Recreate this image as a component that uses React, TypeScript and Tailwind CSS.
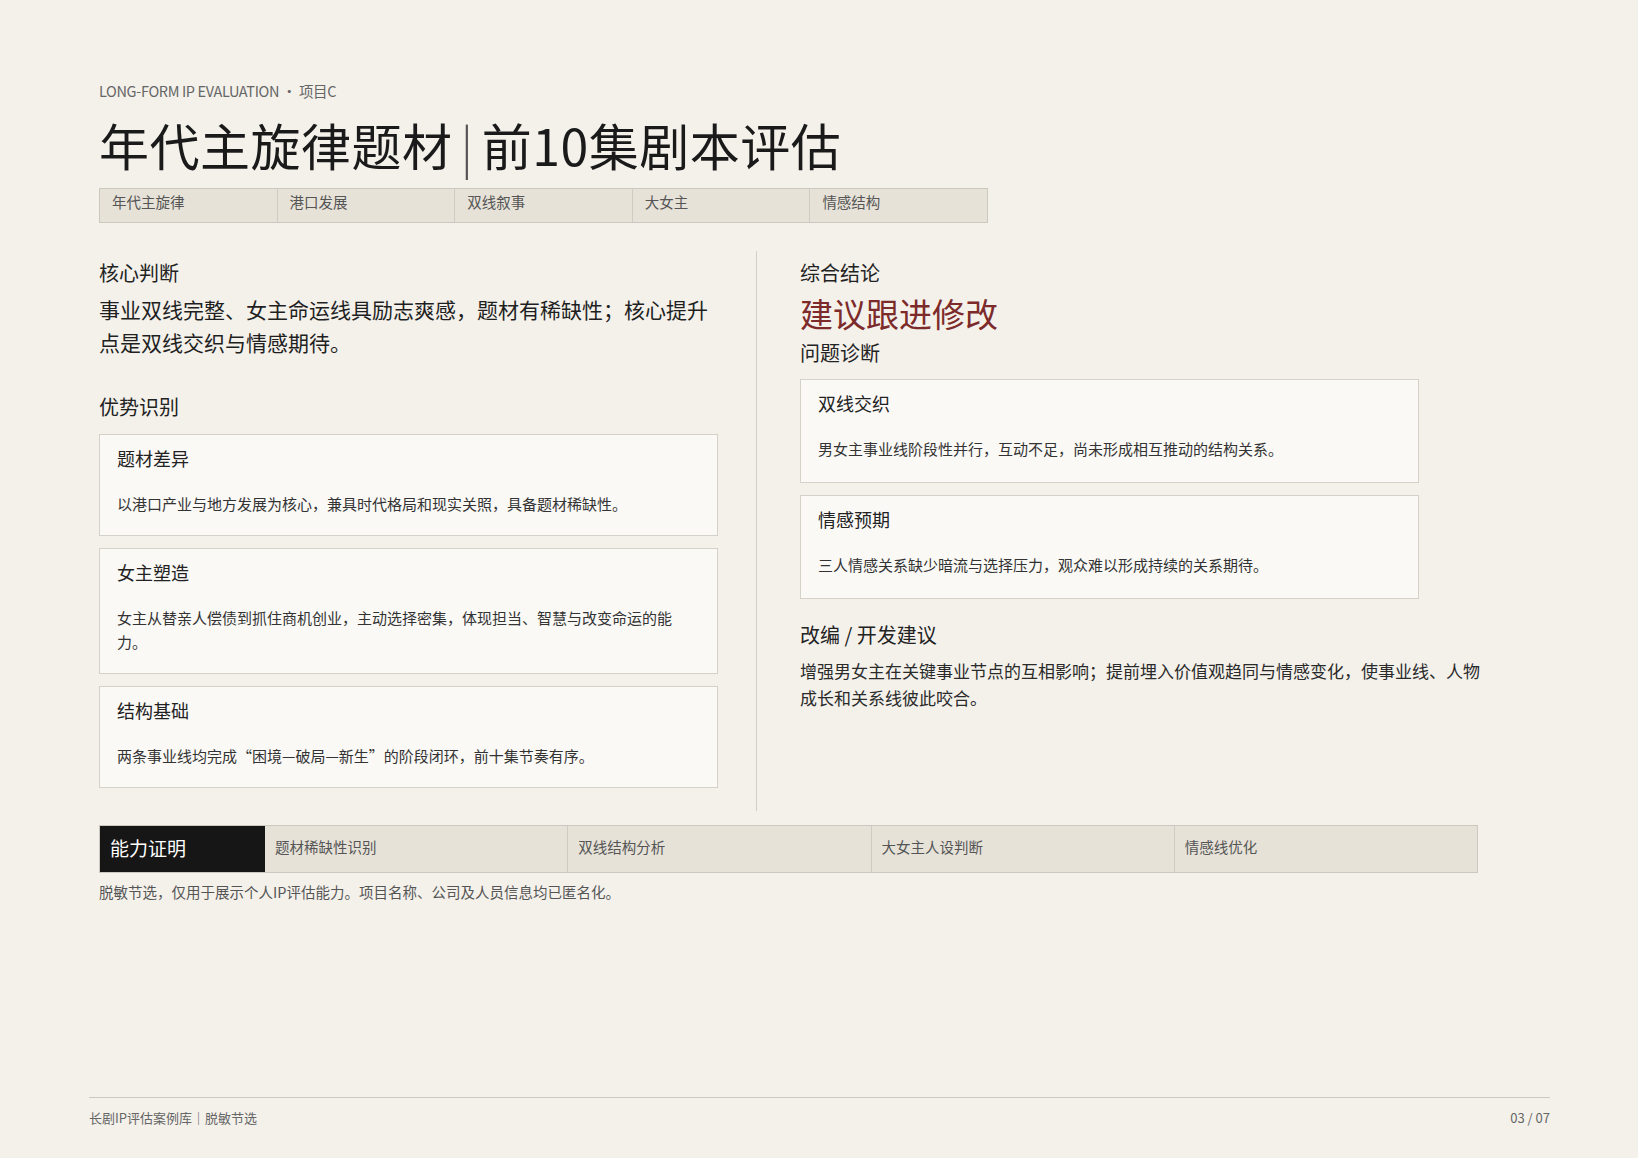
const font = { fontFamily: '"Noto Sans CJK SC", "Noto Sans", sans-serif' };

const tags = ["年代主旋律", "港口发展", "双线叙事", "大女主", "情感结构"];
const strengths = [
  { t: "题材差异", d: "以港口产业与地方发展为核心，兼具时代格局和现实关照，具备题材稀缺性。", h: "h-[102px]" },
  { t: "女主塑造", d: "女主从替亲人偿债到抓住商机创业，主动选择密集，体现担当、智慧与改变命运的能力。", h: "h-[126px]" },
  { t: "结构基础", d: "两条事业线均完成“困境—破局—新生”的阶段闭环，前十集节奏有序。", h: "h-[102px]" },
];
const issues = [
  { t: "双线交织", d: "男女主事业线阶段性并行，互动不足，尚未形成相互推动的结构关系。" },
  { t: "情感预期", d: "三人情感关系缺少暗流与选择压力，观众难以形成持续的关系期待。" },
];
const skills = ["题材稀缺性识别", "双线结构分析", "大女主人设判断", "情感线优化"];

function Card({ t, d, h }: { t: string; d: string; h: string }) {
  return (
    <div className={`${h} border border-[#d5d1c8] bg-[#faf9f6] px-[17px] pt-[10px]`}>
      <div className="text-[18px] text-[#222] leading-[26px]">{t}</div>
      <div className="mt-[21px] text-[15px] leading-[24px] text-[#333]">{d}</div>
    </div>
  );
}

export default function App() {
  return (
    <div style={font} className="w-[1638px] h-[1158px] bg-[#f4f1eb] relative overflow-hidden">
      <div className="pl-[99px] pt-[80px]">
        <div className="text-[14.5px] text-[#666] leading-[22px] tracking-tight">LONG-FORM IP EVALUATION ・ 项目C</div>
        <h1 className="mt-[12px] text-[50px] leading-[60px] text-[#1a1a1a] tracking-[0.5px]">
          年代主旋律题材<span className="text-[#555] font-light mx-[8px]">|</span>前10集剧本评估
        </h1>
        <div className="mt-[14px] flex w-[889px] h-[35px] border border-[#ccc8bf] bg-[#e6e2d8]">
          {tags.map((t, i) => (
            <div key={t} className={`flex-1 px-[12px] text-[14.5px] leading-[26px] text-[#555] ${i ? "border-l border-[#d0ccc3]" : ""}`}>{t}</div>
          ))}
        </div>

        <div className="mt-[28px] flex">
          <div className="w-[619px]">
            <div className="mt-[8px] text-[20px] leading-[28px] text-[#222]">核心判断</div>
            <div className="mt-[6px] text-[21px] leading-[33px] text-[#1f1f1f]">事业双线完整、女主命运线具励志爽感，题材有稀缺性；核心提升点是双线交织与情感期待。</div>
            <div className="mt-[34px] text-[20px] leading-[28px] text-[#222]">优势识别</div>
            <div className="mt-[13px] flex flex-col gap-[12px]">
              {strengths.map((s) => <Card key={s.t} {...s} />)}
            </div>
          </div>
          <div className="ml-[38px] w-px h-[560px] bg-[#d3cfc6]" />
          <div className="ml-[43px]">
            <div className="mt-[8px] text-[20px] leading-[28px] text-[#222]">综合结论</div>
            <div className="mt-[4px] text-[33px] leading-[44px] text-[#7d2a2a]">建议跟进修改</div>
            <div className="mt-[4px] text-[20px] leading-[28px] text-[#222]">问题诊断</div>
            <div className="mt-[12px] w-[619px] flex flex-col gap-[12px]">
              {issues.map((s) => <Card key={s.t} {...s} h="h-[104px]" />)}
            </div>
            <div className="mt-[22px] text-[20px] leading-[28px] text-[#222]">改编 / 开发建议</div>
            <div className="mt-[8px] w-[680px] text-[17px] leading-[27px] text-[#2a2a2a]">增强男女主在关键事业节点的互相影响；提前埋入价值观趋同与情感变化，使事业线、人物成长和关系线彼此咬合。</div>
          </div>
        </div>

        <div className="mt-[14px] flex w-[1379px] h-[48px] border border-[#ccc8bf] bg-[#e6e2d8]">
          <div className="w-[165px] bg-[#161616] text-white text-[19px] leading-[44px] px-[10px]">能力证明</div>
          {skills.map((s, i) => (
            <div key={s} className={`flex-1 px-[10px] text-[14.5px] leading-[42px] text-[#555] ${i ? "border-l border-[#d0ccc3]" : ""}`}>{s}</div>
          ))}
        </div>
        <div className="mt-[8px] text-[14.5px] leading-[22px] text-[#555]">脱敏节选，仅用于展示个人IP评估能力。项目名称、公司及人员信息均已匿名化。</div>
      </div>

      <div className="absolute left-[89px] right-[88px] top-[1097px] border-t border-[#ccc8bf] flex justify-between pt-[10px] text-[13px] text-[#666]">
        <span>长剧IP评估案例库｜脱敏节选</span>
        <span>03 / 07</span>
      </div>
    </div>
  );
}
